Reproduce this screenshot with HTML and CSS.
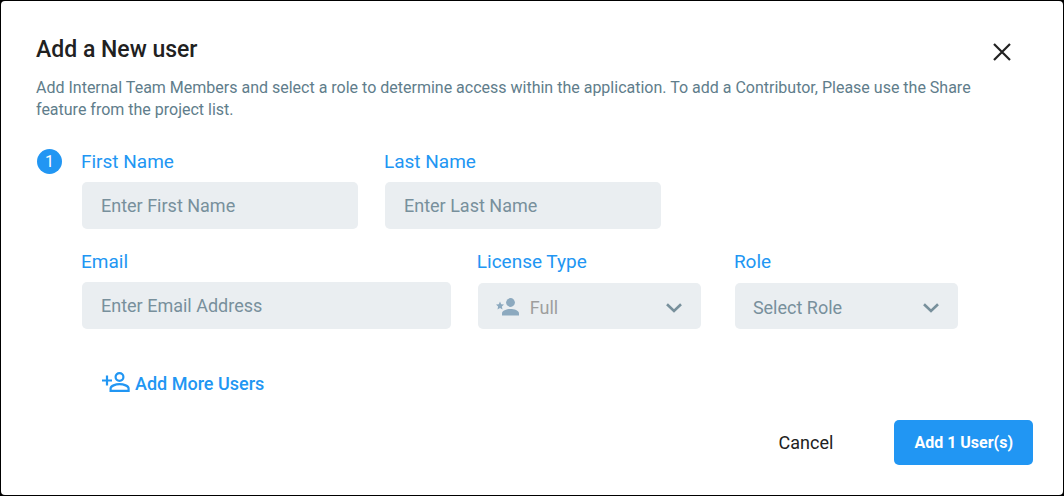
FILE: index.html
```html
<!DOCTYPE html>
<html lang="en">
<head>
  <meta charset="UTF-8" />
  <meta name="viewport" content="width=device-width, initial-scale=1.0"/>
  <title>Add a New user</title>
  <link rel="stylesheet" href="styles.css">
</head>
<body>

  <main class="modal">
    <header class="modal-header">
      <h1>Add a New user</h1>
      <button type="button" class="close-btn" aria-label="Close">
        <svg width="18" height="18" viewBox="0 0 18 18" fill="none" stroke="currentColor" stroke-width="2.2">
          <path d="M1 1L17 17M17 1L1 17"/>
        </svg>
      </button>
    </header>

    <p class="intro">Add Internal Team Members and select a role to determine access within the application. To add a Contributor, Please use the Share feature from the project list.</p>

    <form class="user-form">
      <!-- User entry -->
      <div class="user-entry">
        <span class="step">1</span>
        <div class="fields">
          <div class="row">
            <div class="field field-name">
              <label for="firstName">First Name</label>
              <input type="text" id="firstName" placeholder="Enter First Name" />
            </div>
            <div class="field field-name">
              <label for="lastName">Last Name</label>
              <input type="text" id="lastName" placeholder="Enter Last Name" />
            </div>
          </div>

          <div class="row">
            <div class="field field-email">
              <label for="email">Email</label>
              <input type="email" id="email" placeholder="Enter Email Address" />
            </div>
            <div class="field field-select">
              <label for="licenseType">License Type</label>
              <div class="select-wrap">
                <select id="licenseType" class="with-icon" disabled>
                  <option>Full</option>
                </select>
                <svg class="license-icon" width="24" height="18" viewBox="0 0 24 18" fill="currentColor">
                  <circle cx="14.500" cy="4.500" r="4.400"/>
                  <path d="M6 17.500v-2.200c0-2.900 5-4.300 8.500-4.300s8.500 1.400 8.500 4.300v2.200z"/>
                  <path d="M4 3.500l1.200 2.700 2.800.3-2.100 2 .6 2.900L4 9.900l-2.500 1.500.6-2.900L0 6.500l2.800-.3z"/>
                </svg>
                <svg class="arrow" width="16" height="10" viewBox="0 0 16 10" fill="none" stroke="currentColor" stroke-width="2.600">
                  <path d="M1 1.200L8 8L15 1.200"/>
                </svg>
              </div>
            </div>
            <div class="field field-select field-role">
              <label for="role">Role</label>
              <div class="select-wrap">
                <select id="role">
                  <option>Select Role</option>
                </select>
                <svg class="arrow" width="16" height="10" viewBox="0 0 16 10" fill="none" stroke="currentColor" stroke-width="2.600">
                  <path d="M1 1.200L8 8L15 1.200"/>
                </svg>
              </div>
            </div>
          </div>

          <button type="button" class="add-more">
            <svg width="28" height="20" viewBox="0 0 28 20" fill="none" stroke="currentColor" stroke-width="2.200">
              <circle cx="17.500" cy="5" r="3.900"/>
              <path d="M8.600 18.900v-2.400c0-2.600 5-4.300 9-4.300s9 1.700 9 4.300v2.400z"/>
              <path d="M5 3.500v10M0 8.500h10"/>
            </svg>
            <span>Add More Users</span>
          </button>
        </div>
      </div>

      <!-- Actions -->
      <footer class="actions">
        <button type="button" class="cancel-btn">Cancel</button>
        <button type="submit" class="submit-btn">Add 1 User(s)</button>
      </footer>
    </form>
  </main>

</body>
</html>
```

FILE: styles.css
```css
* {
  box-sizing: border-box;
}
body {
  margin: 0;
  padding: 1px;
  background: #000;
  font-family: Roboto, Arial, sans-serif;
}
button, input, select {
  font-family: inherit;
}
button {
  background: none;
  border: none;
  padding: 0;
  cursor: pointer;
}
svg {
  display: block;
}
.modal {
  background: #fff;
  border-radius: 4px;
  padding: 33px 30px 30px 35px;
}
.modal-header {
  display: flex;
  justify-content: space-between;
  align-items: center;
  padding-right: 22px;
}
h1 {
  margin: 0;
  font-size: 23px;
  font-weight: 500;
  line-height: 32px;
  color: #212121;
}
.close-btn {
  color: #212121;
  padding-top: 4px;
}
.intro {
  margin: 11px 30px 0 0;
  font-size: 16px;
  line-height: 22px;
  color: #607d8b;
}
.user-entry {
  display: flex;
  gap: 19px;
  padding: 28px 75px 0 1px;
}
.step {
  flex: none;
  width: 25px;
  height: 25px;
  border-radius: 50%;
  background: #2196f3;
  color: #fff;
  font-size: 16px;
  line-height: 25px;
  text-align: center;
}
.fields {
  flex: 1;
}
.row {
  display: flex;
  gap: 26px;
  margin-bottom: 20px;
}
.field {
  min-width: 0;
}
.field-name {
  flex: 0 1 277px;
}
.field-email {
  flex: 33 1 0;
}
.field-select {
  flex: 20 1 0;
}
.field-role {
  margin-left: 7px;
}
.field label {
  display: block;
  font-size: 19px;
  line-height: 26px;
  margin-bottom: 7px;
  color: #2196f3;
}
.field input, .select-wrap {
  margin-left: 1px;
}
.field input {
  display: block;
  width: calc(100% - 1px);
  height: 47px;
  padding: 0 19px;
  border: none;
  border-radius: 5px;
  background: #eaeef1;
  font-size: 18px;
  color: #37474f;
}
.field input::placeholder {
  color: #78909c;
  opacity: 1;
}
.select-wrap {
  position: relative;
  margin-top: 8px;
  color: #78909c;
}
.select-wrap select {
  display: block;
  appearance: none;
  width: 100%;
  height: 46px;
  padding: 2px 18px 0;
  border: none;
  border-radius: 5px;
  background: #eaeef1;
  font-size: 18px;
  color: #78909c;
}
.select-wrap select.with-icon {
  padding-left: 52px;
  color: #9e9e9e;
  opacity: 1;
}
.license-icon {
  position: absolute;
  left: 18px;
  top: 15px;
  color: #8ca9bf;
  pointer-events: none;
}
.arrow {
  position: absolute;
  right: 19px;
  top: 20px;
  pointer-events: none;
}
.add-more {
  display: flex;
  align-items: flex-start;
  gap: 5px;
  margin: 43px 0 0 21px;
  color: #2196f3;
  font-size: 18px;
  font-weight: 500;
  line-height: 24px;
}
.actions {
  display: flex;
  justify-content: flex-end;
  align-items: center;
  gap: 61px;
  margin-top: 24px;
}
.cancel-btn {
  color: #212121;
  font-size: 18px;
}
.submit-btn {
  height: 45px;
  padding: 0 20px;
  border-radius: 5px;
  background: #2196f3;
  color: #fff;
  font-size: 16px;
  font-weight: 700;
}
```
